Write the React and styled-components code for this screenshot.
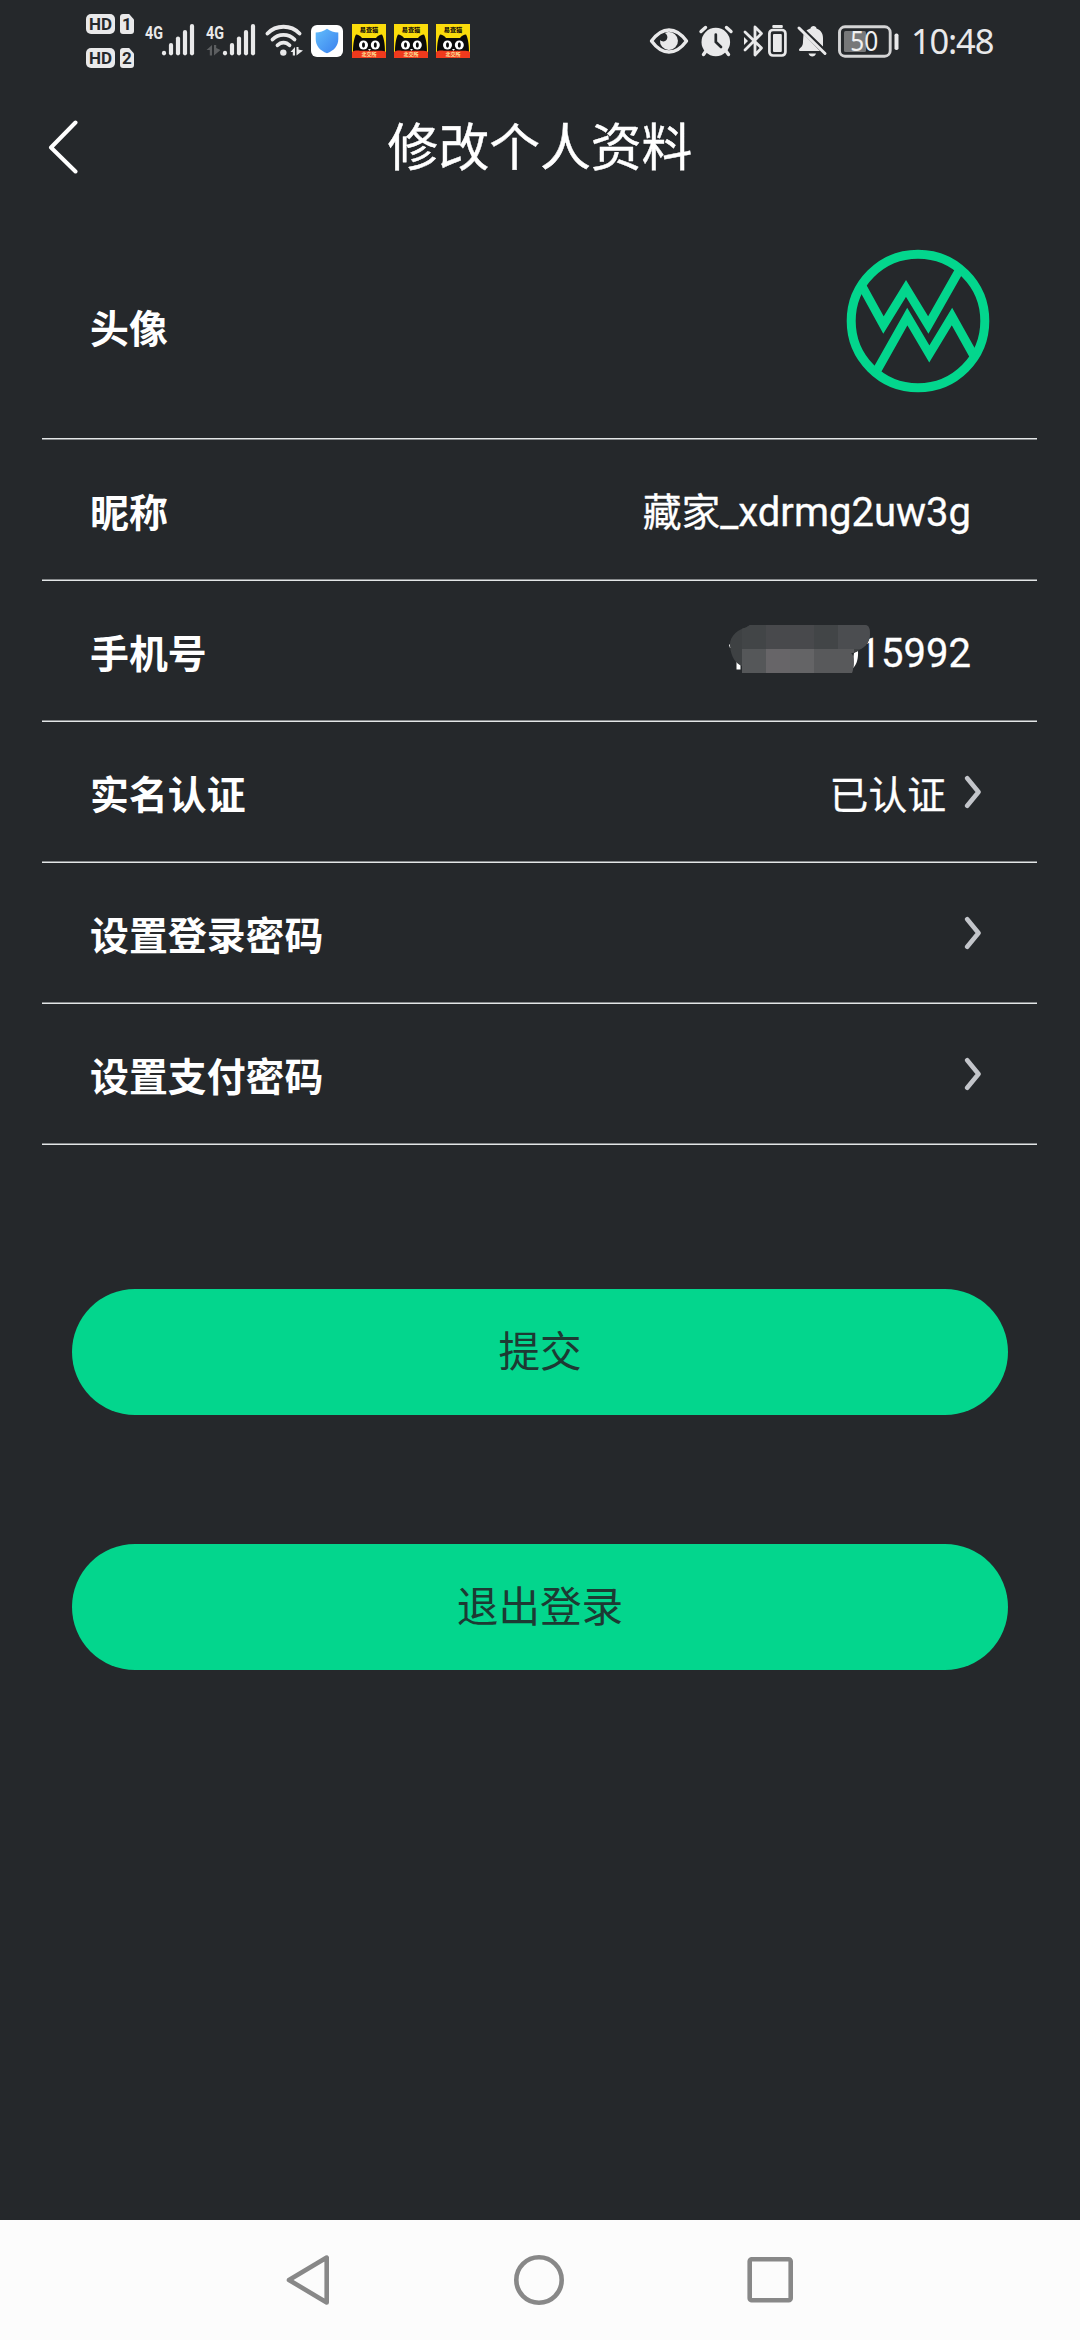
import React from "react";
import styled, { createGlobalStyle } from "styled-components";

const LIGHT = "#e9e9ea";
const GREEN = "#03d68d";
const BG = "#25282b";

const App = () => (
  <>
    <GlobalStyle />
    <Screen>
      <StatusBar>
        <HdColumn>
          <HdBadge sim="1" />
          <HdBadge sim="2" />
        </HdColumn>
        <SignalIcon />
        <SignalIcon dimArrows />
        <WifiIcon />
        <ShieldIcon />
        <CatList>
          <CatIcon />
          <CatIcon />
          <CatIcon />
        </CatList>
        <StatusRight />
        <Clock>10:48</Clock>
      </StatusBar>

      <Header>
        <BackButton aria-label="返回">
          <svg width="32" height="54" viewBox="0 0 32 54">
            <path d="M28.5 2.5 L4 27.5 L28.5 51.5" fill="none" stroke="#fff" strokeWidth="4" strokeLinecap="round" strokeLinejoin="round" />
          </svg>
        </BackButton>
        <Title>修改个人资料</Title>
      </Header>

      <List>
        <Row $tall>
          <Label $tall>头像</Label>
          <Avatar />
        </Row>
        <Divider $flip />
        <Row>
          <Label>昵称</Label>
          <Value>
            藏家<Latin>_xdrmg2uw3g</Latin>
          </Value>
        </Row>
        <Divider />
        <Row>
          <Label>手机号</Label>
          <Phone>
            <Mosaic />
            <Value>
              <Latin>15992</Latin>
            </Value>
          </Phone>
        </Row>
        <Divider />
        <Row $link>
          <Label>实名认证</Label>
          <Value $link>已认证</Value>
          <Chevron />
        </Row>
        <Divider />
        <Row $link>
          <Label>设置登录密码</Label>
          <Chevron />
        </Row>
        <Divider />
        <Row $link>
          <Label>设置支付密码</Label>
          <Chevron />
        </Row>
        <Divider />
      </List>

      <Actions>
        <Button>提交</Button>
        <Button>退出登录</Button>
      </Actions>

      <NavBar>
        <svg width="44" height="52" viewBox="0 0 44 52">
          <path d="M40.7 3.6 V48.4 L3 26 Z" />
        </svg>
        <svg width="52" height="52" viewBox="0 0 52 52">
          <circle cx="26" cy="26" r="22.7" />
        </svg>
        <svg width="46" height="52" viewBox="0 0 46 52">
          <rect x="2.7" y="5.2" width="41" height="41" rx="2" />
        </svg>
      </NavBar>
    </Screen>
  </>
);

export default App;

const HdBadge = ({ sim }) => (
  <HdRow>
    <HdLabel>HD</HdLabel>
    <SimLabel>{sim}</SimLabel>
  </HdRow>
);

const SignalIcon = ({ dimArrows }) => (
  <Signal width="45" height="34" viewBox="0 0 45 34">
    <text x="0" y="15.500" fontSize="18" fontWeight="700" textLength="18" lengthAdjust="spacingAndGlyphs" fill={LIGHT}>
      4G
    </text>
    {dimArrows && (
      <g fill="#5c5e60">
        <path d="M0.5 27 L6 22 V32.5 H3.8 V27 Z" />
        <path d="M8 22 H10.2 V25 L14.5 27 L8 32.5 Z" />
      </g>
    )}
    <g stroke={LIGHT} strokeWidth="4.2" strokeLinecap="round">
      <path d="M19 29.8 V30.3" />
      <path d="M26 22 V30.3" />
      <path d="M33 15.5 V30.3" />
      <path d="M40 9 V30.3" />
      <path d="M47 3 V30.3" />
    </g>
  </Signal>
);

const WifiIcon = () => (
  <Wifi width="38" height="34" viewBox="0 0 38 34">
    <g fill="none" stroke={LIGHT} strokeWidth="3.8" strokeLinecap="round">
      <path d="M2.5 9.5 C11 0.5 26 0.5 34.5 9.5" />
      <path d="M7.5 15.5 C13.5 9.2 23.5 9.2 29.5 15.5" />
      <path d="M12.5 21.3 C16 17.6 21 17.6 24.5 21.3" />
    </g>
    <circle cx="18.3" cy="28.6" r="3.2" fill={LIGHT} />
    <path d="M25.5 28 L30 23 V31.5 H27.8 V28 Z M31.5 23 H33.5 V25.5 L38 26.5 L31.5 31.5 Z" fill={LIGHT} />
  </Wifi>
);

const ShieldIcon = () => (
  <svg width="32" height="32" viewBox="0 0 32 32">
    <defs>
      <linearGradient id="shield" x1="0" y1="0" x2="1" y2="1">
        <stop offset="0" stopColor="#62bdfb" />
        <stop offset="1" stopColor="#3a80ee" />
      </linearGradient>
    </defs>
    <rect width="32" height="32" rx="6" fill="#fff" />
    <path d="M16 3.7 C19 6 23 7.3 27.3 7.6 V14 C27.3 21 23 25.5 16 28.3 C9 25.5 4.7 21 4.7 14 V7.6 C9 7.3 13 6 16 3.7 Z" fill="url(#shield)" />
  </svg>
);

const CatIcon = () => (
  <svg width="34" height="34" viewBox="0 0 34 34">
    <rect width="34" height="34" fill="#fbdc0b" />
    <text x="17" y="7.8" fontSize="6.2" fontWeight="900" textAnchor="middle" fill="#1c1608">
      易查猫
    </text>
    <path d="M1 28 C1 23 1.5 15 4 10.5 C6 10.5 8.5 12 10 14 H24 C25.5 12 28 10.5 30 10.5 C32.5 15 33 23 33 28 Z" fill="#0b0b0b" />
    <ellipse cx="11.5" cy="21" rx="4.5" ry="4.6" fill="#fff" />
    <ellipse cx="23.3" cy="21" rx="4.5" ry="4.6" fill="#fff" />
    <ellipse cx="11.5" cy="21" rx="1.5" ry="2.8" fill="#0b0b0b" />
    <ellipse cx="23.3" cy="21" rx="1.5" ry="2.8" fill="#0b0b0b" />
    <path d="M16 25 H19 L17.5 27 Z" fill="#fff" />
    <path d="M0 34 V28 C3 26 6 26.7 8 26.7 H26 C29 26.7 32 26.5 34 28 V34 Z" fill="#ef3a1d" />
    <text x="17" y="32" fontSize="5" fontWeight="700" textAnchor="middle" fill="#ffe9a0">
      北交所
    </text>
  </svg>
);

const StatusRight = () => (
  <StatusIcons width="252" height="36" viewBox="647 22 252 36">
    {/* eye */}
    <path d="M650.5 40 C656 32.5 661 29 668 29 C675 29 680 32.5 685.5 40 C680 47.5 675 51 668 51 C661 51 656 47.5 650.5 40 Z" fill="none" stroke={LIGHT} strokeWidth="3.4" strokeLinejoin="round" />
    <path d="M667 31 A9 9 0 1 1 659 39 C661.5 41.5 665 40.5 666 38 C667 35.5 666 33.5 664 32 Z" fill={LIGHT} />
    {/* alarm */}
    <circle cx="714.8" cy="41" r="14.3" fill={LIGHT} />
    <path d="M700 30.5 L704.5 26.5 M725.5 26.5 L730 30.5" stroke={LIGHT} strokeWidth="3.4" strokeLinecap="round" />
    <path d="M705 50 L702.5 53.5 M725 50 L727.5 53.5" stroke={LIGHT} strokeWidth="3.4" strokeLinecap="round" />
    <path d="M714.8 33.5 V41 L720 46" fill="none" stroke={BG} strokeWidth="2.7" strokeLinecap="round" />
    {/* bluetooth */}
    <path d="M744 31 L760.5 47 L754 54 V26 L760.5 32.5 L744 49" fill="none" stroke={LIGHT} strokeWidth="2.8" strokeLinejoin="round" strokeLinecap="round" />
    <path d="M743 36 L747 40 L743 44 Z" fill={LIGHT} />
    <rect x="768.4" y="29" width="16" height="25.5" rx="3.5" fill="none" stroke={LIGHT} strokeWidth="2.7" />
    <rect x="772" y="33" width="8.8" height="18" rx="1" fill={LIGHT} />
    <rect x="771.3" y="24" width="10.5" height="3" rx="1" fill={LIGHT} />
    {/* muted bell */}
    <path d="M805.5 29.5 C807 28.5 808.5 27.8 809.5 27.5 C809.5 24 815.5 24 815.5 27.5 C820 29 822 32.5 822 37 V45.5 Z" fill={LIGHT} />
    <path d="M802.5 33 L819 50 H799 C798 50 797.5 48.8 798.5 47.8 C801.5 45 802 44 802 40 Z" fill={LIGHT} />
    <path d="M798 27 L824 52.5" stroke={LIGHT} strokeWidth="3" strokeLinecap="round" />
    <path d="M807.5 52.5 H815 C814 56.5 808.5 56.5 807.5 52.5 Z" fill={LIGHT} />
    {/* battery */}
    <rect x="838.5" y="25.8" width="50.7" height="29.4" rx="5.5" fill="none" stroke="#d4d4d5" strokeWidth="2.9" />
    <rect x="843" y="30" width="22" height="21" rx="1.5" fill="#777879" />
    <rect x="893.5" y="32.5" width="4" height="16.5" rx="1.8" fill={LIGHT} />
    <text x="863.3" y="50" fontSize="26.5" textAnchor="middle" textLength="28" lengthAdjust="spacingAndGlyphs" fill="#f0f0f0">
      50
    </text>
  </StatusIcons>
);

const Avatar = () => (
  <svg width="144" height="144" viewBox="0 0 144 144" fill="none" stroke={GREEN} strokeWidth="8.8">
    <circle cx="72" cy="72" r="66.8" strokeWidth="9" />
    <path d="M16 37 L37.5 76 L60 39.5 L82.3 76 L113.5 21" />
    <path d="M31.5 120.5 L61.3 67.5 L83.3 105 L106 67.5 L128 107" />
  </svg>
);

const Chevron = () => (
  <svg width="18" height="34" viewBox="0 0 18 34">
    <path d="M3.2 3.2 L14.5 17 L3.2 30.8" fill="none" stroke="#c3c5ca" strokeWidth="4.6" strokeLinecap="round" strokeLinejoin="round" />
  </svg>
);

// smudge that hides the first digits of the phone number
const Mosaic = () => (
  <MosaicSvg width="142" height="50" viewBox="731 623 142 50">
    <defs>
      <clipPath id="smudge">
        <path d="M732 645 C731 635 741 628 748 626.5 L752 624 H867 C871 624 872 628 872 633 C872 642 866 648 855 652 L853 652 C857 655 856 666 854 672 H744 V665 C738 663 733 656 732 645 Z" />
      </clipPath>
    </defs>
    <path d="M731 644 L734 641 V647 L732 647 Z M738.5 661 H742.5 V668.5 H738.5 Z M856 652 L860 650 C860.5 658 858.5 665 854 668 Z" fill="#fff" />
    <g clipPath="url(#smudge)">
      <rect x="731" y="623" width="142" height="50" fill="#3e4143" />
      <rect x="744" y="624" width="24" height="24" fill="#424547" />
      <rect x="768" y="624" width="48" height="24" fill="#48494c" />
      <rect x="816" y="624" width="24" height="24" fill="#424547" />
      <rect x="840" y="624" width="33" height="24" fill="#4b4d50" />
      <rect x="744" y="648" width="24" height="24" fill="#555759" />
      <rect x="768" y="648" width="24" height="24" fill="#676568" />
      <rect x="792" y="648" width="24" height="24" fill="#646466" />
      <rect x="816" y="648" width="40" height="24" fill="#58595b" />
    </g>
  </MosaicSvg>
);

const GlobalStyle = createGlobalStyle`
  body {
    margin: 0;
    background: ${BG};
    font-family: "Noto Sans", "Noto Sans CJK SC", sans-serif;
  }
  svg {
    display: block;
    flex: none;
  }
`;

const Screen = styled.div`
  display: flex;
  flex-direction: column;
  width: 1080px;
  height: 2340px;
  overflow: hidden;
  background: ${BG};
  color: #fff;
`;

const StatusBar = styled.div`
  display: flex;
  align-items: center;
  box-sizing: border-box;
  height: 82px;
  padding: 0 87px 0 86px;
  color: ${LIGHT};
`;

const HdColumn = styled.div`
  display: flex;
  flex-direction: column;
  gap: 14px;
  width: 59px;
`;

const HdRow = styled.div`
  display: flex;
  gap: 5px;
  height: 20px;
`;

const HdLabel = styled.span`
  width: 29px;
  border-radius: 5px;
  background: ${LIGHT};
  color: ${BG};
  font: 700 17px/20px Roboto, sans-serif;
  text-align: center;
`;

const SimLabel = styled.span`
  width: 14px;
  border-radius: 3px;
  background: ${LIGHT};
  clip-path: polygon(0 0, 65% 0, 100% 28%, 100% 100%, 0 100%);
  color: ${BG};
  font: 700 17px/20px Roboto, sans-serif;
  text-align: center;
`;

const Signal = styled.svg`
  overflow: visible;
  margin: -2px 16px 0 0;
  font-family: Roboto, sans-serif;
`;

const Wifi = styled.svg`
  margin-right: 8px;
  margin-left: -2px;
`;

const CatList = styled.div`
  display: flex;
  gap: 8px;
  margin-left: 9px;
`;

const StatusIcons = styled.svg`
  margin-left: auto;
`;

const Clock = styled.span`
  width: 93px;
  box-sizing: border-box;
  padding-left: 11px;
  font-size: 34.5px;
  line-height: 40px;
  letter-spacing: -1.2px;
  white-space: nowrap;
`;

const Header = styled.header`
  display: grid;
  grid-template-columns: 120px 1fr 120px;
  align-items: center;
  height: 130px;
`;

const BackButton = styled.button`
  justify-self: start;
  margin-left: 47px;
  padding: 0;
  border: 0;
  background: none;
`;

const Title = styled.h1`
  margin: 0;
  font-size: 50.8px;
  font-weight: 400;
  line-height: 60px;
  text-align: center;
  -webkit-text-stroke: 0.4px #fff;
`;

const List = styled.main`
  padding: 0 43px 0 42px;
`;

const Row = styled.div`
  display: flex;
  align-items: center;
  box-sizing: border-box;
  height: ${props => (props.$tall ? 226 : 139)}px;
  padding: ${props => {
    if (props.$tall) return "0 47px 9px 48px";
    return props.$link ? "0 55px 0 48px" : "0 66px 0 48px";
  }};
`;

const Divider = styled.div`
  height: 1px;
  border-top: 1px solid ${props => (props.$flip ? "#e3e6e7" : "#85888a")};
  background: ${props => (props.$flip ? "#85888a" : "#e3e6e7")};
`;

const Label = styled.span`
  flex: 1;
  padding-top: ${props => (props.$tall ? 14 : 5)}px;
  font-size: 38.9px;
  font-weight: 700;
  line-height: 44px;
`;

const Value = styled.span`
  padding-top: 4px;
  margin-right: ${props => (props.$link ? 18 : 0)}px;
  font-size: 38.8px;
  line-height: 44px;
  -webkit-text-stroke: 0.3px #fff;
`;

const Latin = styled.span`
  font-family: Roboto, sans-serif;
  font-size: 40px;
`;

const Phone = styled.div`
  display: flex;
  align-items: center;
`;

const MosaicSvg = styled.svg`
  position: relative;
  z-index: 1;
  margin: -4px -12px 0 0;
`;

const Actions = styled.div`
  display: flex;
  flex-direction: column;
  flex: 1;
  gap: 129px;
  padding: 144px 72px 0;
`;

const Button = styled.button`
  height: 126px;
  padding: 0 0 7px;
  border: 0;
  border-radius: 63px;
  background: ${GREEN};
  color: #1d3a33;
  font-family: inherit;
  font-size: 41.6px;
`;

const NavBar = styled.nav`
  display: flex;
  align-items: center;
  justify-content: space-between;
  box-sizing: border-box;
  height: 120px;
  padding: 0 287px 0 286px;
  background: #fcfcfc;

  svg {
    fill: none;
    stroke: #888;
    stroke-width: 4.6;
    stroke-linejoin: round;
  }
`;
